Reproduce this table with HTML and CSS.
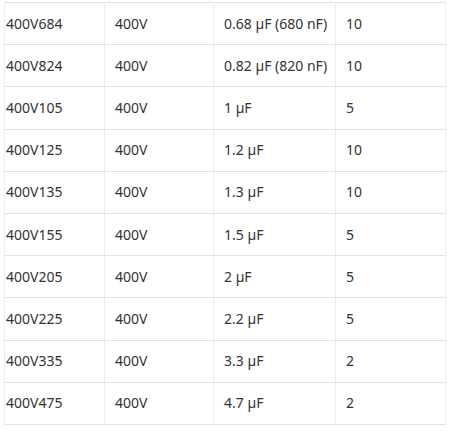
FILE: index.html
```html
<!DOCTYPE html>
<html>
<head>
<meta charset="utf-8">
<link rel="stylesheet" href="styles.css">
</head>
<body>
<table class="caps">
  <colgroup>
    <col class="c1"><col class="c2"><col class="c3"><col class="c4">
  </colgroup>
  <tbody>
    <tr><td>400V684</td><td>400V</td><td>0.68 µF (680 nF)</td><td>10</td></tr>
    <tr><td>400V824</td><td>400V</td><td>0.82 µF (820 nF)</td><td>10</td></tr>
    <tr><td>400V105</td><td>400V</td><td>1 µF</td><td>5</td></tr>
    <tr><td>400V125</td><td>400V</td><td>1.2 µF</td><td>10</td></tr>
    <tr><td>400V135</td><td>400V</td><td>1.3 µF</td><td>10</td></tr>
    <tr><td>400V155</td><td>400V</td><td>1.5 µF</td><td>5</td></tr>
    <tr><td>400V205</td><td>400V</td><td>2 µF</td><td>5</td></tr>
    <tr><td>400V225</td><td>400V</td><td>2.2 µF</td><td>5</td></tr>
    <tr><td>400V335</td><td>400V</td><td>3.3 µF</td><td>2</td></tr>
    <tr><td>400V475</td><td>400V</td><td>4.7 µF</td><td>2</td></tr>
  </tbody>
</table>
</body>
</html>
```
FILE: styles.css
```css
html, body {
  margin: 0;
  padding: 0;
  background: #ffffff;
}
body {
  padding: 2px 0 0 4px;
  font-family: "Noto Sans", "Open Sans", sans-serif;
  font-size: 14px;
  color: #333333;
}
.caps {
  border-collapse: collapse;
  table-layout: fixed;
  width: 441px;
}
.c1 { width: 100px; }
.c2 { width: 109px; }
.c3 { width: 122px; }
.c4 { width: 110px; }
.caps td {
  height: 41.2px;
  padding: 0 0 0 10px;
  border-top: 1px solid #e2e2e2;
  border-bottom: 1px solid #e2e2e2;
  border-left: 1px solid #ededed;
  border-right: 1px solid #ededed;
  vertical-align: middle;
  white-space: nowrap;
  line-height: 20px;
}
.caps td:first-child {
  padding-left: 1px;
}
```
